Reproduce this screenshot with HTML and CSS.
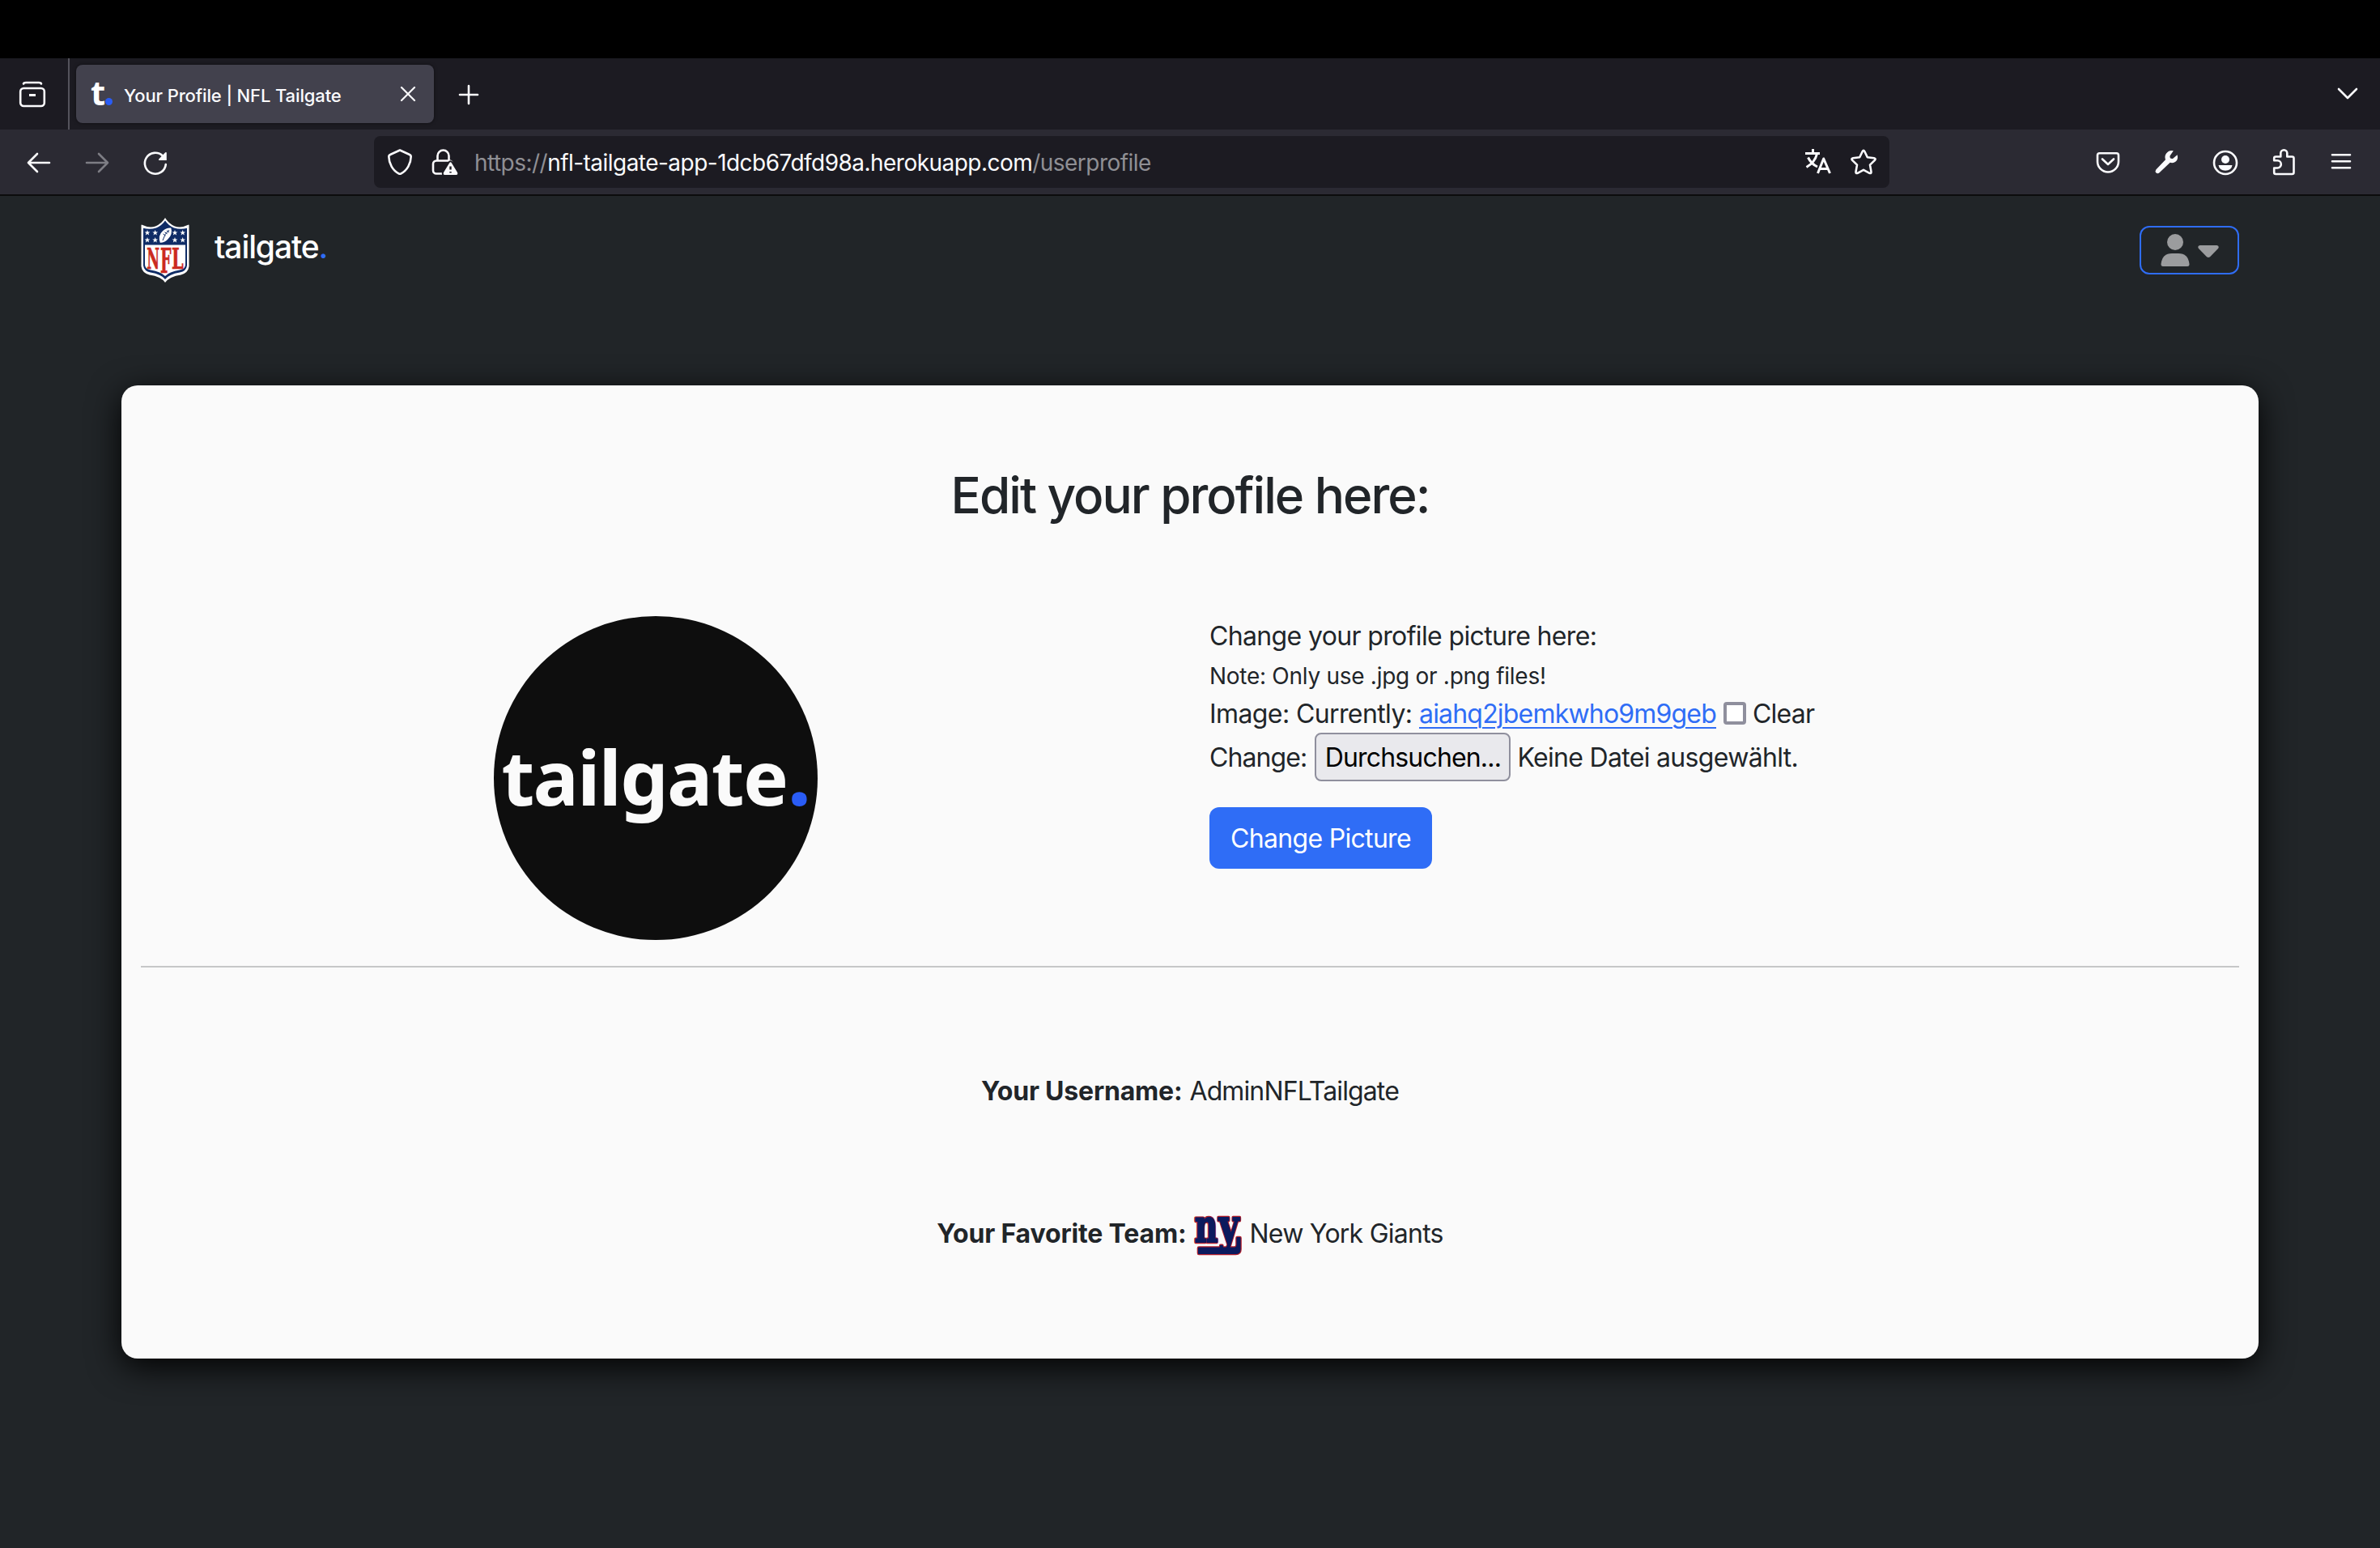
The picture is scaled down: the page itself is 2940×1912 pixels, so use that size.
FILE: index.html
```
<!DOCTYPE html>
<html lang="en">
<head>
<meta charset="utf-8">
<title>Your Profile | NFL Tailgate</title>
<link rel="stylesheet" href="styles.css">
</head>
<body>
<div class="notch"></div>
<div class="tabbar">
  <div class="view-slot">
    <svg class="icon" viewBox="0 0 32 32"><path d="M5 3.500Q5.500 2 8 2h16q2.500 0 3 1.500"/><rect x="1.200" y="9" width="29.600" height="22" rx="4"/><path class="thick" d="M12 17.500h8"/></svg>
  </div>
  <div class="tab">
    <span class="favicon">t<i></i></span>
    <span class="t tab-title">Your Profile | NFL Tailgate</span>
    <svg class="close" viewBox="0 0 20 20"><path d="M2 2l16 16M18 2L2 18"/></svg>
  </div>
  <svg class="icon plus" viewBox="0 0 32 32"><path d="M16 5v22M5 16h22"/></svg>
  <svg class="icon chevron" viewBox="0 0 32 32"><path d="M5 10l11 11 11-11"/></svg>
</div>
<div class="toolbar">
  <svg class="icon" viewBox="0 0 32 32"><path d="M29 17H3M14 6L3 17l11 11"/></svg>
  <svg class="icon dim" viewBox="0 0 32 32"><path d="M3 17h26M18 6l11 11-11 11"/></svg>
  <svg class="icon" viewBox="0 0 32 32"><path d="M28.800 19A13 13 0 1 1 25 8.500"/><path class="solid" d="M29.800 4.500V14H20.500q-1-.5-.3-1.500l8-8.200q1-.8 1.600.2z"/></svg>
  <div class="urlbar">
    <svg class="icon shield" viewBox="0 0 32 32"><path d="M16 1.500l11.500 5.200q2.200.9 2.200 2.800C29.500 18 25 26.500 17.500 30.300q-1.500.8-3 0C7 26.500 2.500 18 2.300 9.500q0-1.900 2.200-2.800z"/></svg>
    <svg class="icon lock" viewBox="0 0 32 32"><path d="M6.500 14V8.500a7 7 0 0 1 14 0V14M13 30.500H5a4 4 0 0 1-4-4v-8a4 4 0 0 1 4-4h16q2 0 3 1.500"/><path class="badge" d="M21 17.500q1.500-2.500 3 0l7 11.500q1 2.800-1.500 3h-14q-2.500-.2-1.500-3z"/><path class="bang" d="M22.500 21.500v4M22.500 28v1.500"/></svg>
    <span class="t url"><span class="faint">https://</span>nfl-tailgate-app-1dcb67dfd98a.herokuapp.com<span class="faint">/userprofile</span></span>
    <svg class="icon translate" viewBox="0 0 32 32"><path d="M0 5.500h18M9.500 0v5M14.500 6Q12 16.500 1.500 22.500M3.500 10.500q4 8 11.500 11.500M15.500 30l7.200-18 7.800 18M18 24.500h10.500"/></svg>
    <svg class="icon" viewBox="0 0 32 32"><path d="M14.700 3q1.300-2.500 2.600 0l3.500 7.300 8.200 1q2.600.6.9 2.600L24 19.600l1.500 8.600q.1 2.500-2.200 1.600L16 25.800l-7.300 4q-2.300.9-2.200-1.600L8 19.600l-5.900-5.700q-1.700-2 .9-2.600l8.200-1z"/></svg>
  </div>
  <div class="tools">
    <svg class="icon" viewBox="0 0 32 32"><path d="M5.500 5.200h21q2.500 0 2.500 2.500V15.500a13 13 0 0 1-26 0V7.700q0-2.500 2.500-2.500zM9 12.500l7 6.500 7-6.500"/></svg>
    <svg class="icon" viewBox="0 0 32 32"><path class="solid" d="M24.800 2.200l-4.300 6.300q-.6 4 3.500 3.500l5.600-4.800q1.500 5.300-1.900 8.300-3 2.500-7 1.300L7.500 29.300q-2 1.700-4 .3-1.800-2-.2-4.200L15 13.200q-1.500-4.500 1-7.800 3.500-4.300 8.800-3.200z"/></svg>
    <svg class="icon" viewBox="0 0 32 32"><circle cx="17" cy="17" r="14"/><circle class="solid" cx="17" cy="13" r="5"/><path class="solid" d="M8.500 20h17q-1 6.500-8.500 6.800-7.500-.3-8.500-6.800z"/></svg>
    <svg class="icon" viewBox="0 0 32 32"><path d="M13.300 9.500V5.200a4 4 0 0 1 8 0V9.500H27.500q2 0 2 2V29q0 2-2 2H7.200q-2 0-2-2V23.500h4a4.600 4.600 0 0 0 0-9.200H5.200V11.500q0-2 2-2z"/></svg>
    <svg class="icon" viewBox="0 0 32 32"><path d="M5 7.200h22M5 15.200h22M5 23.200h22"/></svg>
  </div>
</div>
<div class="page">
  <header class="site">
    <div class="brand">
      <svg class="nfl" viewBox="0 0 60 80">
        <path fill="#fff" d="M30 0Q34 7 42 10.500 50 13 59 8.500L59.500 9V60q-1 8-10 10.500-14 2-19.500 9.500-5-7.500-19.500-9.500-9-2.500-10-10.500V9L1 8.500q9 4.500 17 2Q26 7 30 0z"/>
        <path fill="#0f2c66" d="M30 3.500q4 6 11 9 8 2.500 16 .3V59q-1 7-9 8.500-13 2-18 8.500-5-6.500-18-8.500-8-1.500-9-8.500V12.800q8 2.200 16-.3 7-3 11-9z"/>
        <path fill="#fff" d="M5 33.500h50V58q0 5-7 6.500-13 2-18 7.500-5-5.500-18-7.500-7-1.500-7-6.500z"/>
        <g class="stars"><path id="star" d="M8 15l.9 2.400h2.500l-2 1.600.8 2.500L8 20l-2.200 1.500.8-2.500-2-1.600h2.500z"/><use href="#star" x="9.700"/><use href="#star" x="34"/><use href="#star" x="43.700"/><use href="#star" y="9"/><use href="#star" x="9.700" y="9"/><use href="#star" x="34" y="9"/><use href="#star" x="43.700" y="9"/></g>
        <path fill="#fff" d="M37.300 12.500q2.500 8-4 14-4.500 4.500-9.500 4.300-3-9 3-14.300 4.500-4.500 10.500-4z"/>
        <path fill="none" stroke="#0f2c66" stroke-width="1" d="M27 28q2-8 8-13M27.500 20l3 2M29.500 17.800l3 2M32 15.800l3 2"/>
        <text class="nfl-letter" transform="translate(7.300 63) scale(.48 1)">N</text>
        <text class="nfl-letter" transform="translate(24 67.500) scale(.53 1.170)">F</text>
        <text class="nfl-letter" transform="translate(38 63) scale(.58 1)">L</text>
      </svg>
      <span class="t brand-name">tailgate<span class="blue">.</span></span>
    </div>
    <div class="user-menu">
      <svg class="person" viewBox="0 0 36 40"><circle cx="18" cy="10" r="10"/><path d="M.500 37Q2 24 14 24h8q12 0 13.500 13 .2 3-2.500 3H3Q.3 40 .5 37z"/></svg>
      <svg class="caret" viewBox="0 0 26 16"><path d="M2.500 0h21q3.500 1 1.500 4L15 14.300q-2 1.500-4 0L1 4Q-1 1 2.500 0z"/></svg>
    </div>
  </header>
  <main class="card">
    <h1><span class="t h-title">Edit your profile here:</span></h1>
    <div class="columns">
      <div class="col-pic"><div class="avatar"><span class="t logo-word">tailgate<span class="logo-dot">.</span></span></div></div>
      <form class="col-form">
        <div class="row r1"><span class="t f-label">Change your profile picture here:</span></div>
        <div class="row r2"><span class="t f-note">Note: Only use .jpg or .png files!</span></div>
        <div class="row r3"><span class="t f-cur">Image: Currently:</span><a class="t f-link">aiahq2jbemkwho9m9geb</a><span class="check"></span><span class="t f-clear">Clear</span></div>
        <div class="row r4"><span class="t f-change">Change:</span><span class="browse"><span class="t f-browse">Durchsuchen...</span></span><span class="t f-none">Keine Datei ausgewählt.</span></div>
        <div class="submit"><span class="t f-submit">Change Picture</span></div>
      </form>
    </div>
    <div class="rule"></div>
    <p class="info"><b class="t i-user">Your Username:</b><span class="t i-name">AdminNFLTailgate</span></p>
    <p class="info team"><b class="t i-fav">Your Favorite Team:</b>
      <svg class="giants" viewBox="0 0 60 48">
        <path class="edge" d="M7 39.500H51q3.500 0 3.500-4V27h3v14q0 5-5 5H7z"/>
        <g class="ny edge"><text transform="translate(1.500 32) scale(.68 .96)">n</text><text transform="translate(31.500 32) scale(.74 .96)">y</text></g>
        <path class="fill" d="M7 39.500H51q3.500 0 3.500-4V27h3v14q0 5-5 5H7z"/>
        <g class="ny fill"><text transform="translate(1.500 32) scale(.68 .96)">n</text><text transform="translate(31.500 32) scale(.74 .96)">y</text></g>
      </svg>
      <span class="t i-team">New York Giants</span></p>
  </main>
</div>
</body>
</html>
```
FILE: styles.css
```
* { box-sizing: border-box; }
html, body { margin: 0; height: 1912px; overflow: hidden; }
body { font-family: Inter, "Liberation Sans", sans-serif; font-size: 32px; color: #212529; background: #212529; display: flex; flex-direction: column; }
.t { white-space: pre; display: inline-block; }
.notch { height: 72px; background: #000; flex: none; }

.icon { width: 32px; height: 32px; flex: none; fill: none; stroke: #fbfbfe; stroke-width: 2.6; stroke-linecap: round; stroke-linejoin: round; overflow: visible; }
.icon .solid { fill: #fbfbfe; stroke: none; }
.icon .badge { fill: #fbfbfe; stroke: #1c1b22; stroke-width: 4; paint-order: stroke; }
.icon .thick { stroke-width: 3; stroke-linecap: butt; }
.icon .bang { stroke: #1c1b22; stroke-width: 2.4; stroke-linecap: butt; }
.dim { opacity: .4; }

.tabbar { height: 88px; flex: none; background: #1c1b22; display: flex; align-items: center; padding-right: 24px; }
.view-slot { width: 86px; height: 88px; border-right: 2px solid #54535c; display: flex; align-items: center; padding-left: 24px; margin-right: 8px; }
.tab { width: 442px; height: 72px; border-radius: 8px; background: #42414d; box-shadow: 0 0 4px rgba(0,0,0,.5); display: flex; align-items: center; padding: 0 22px 0 18px; }
.favicon { width: 41px; height: 40px; display: flex; align-items: baseline; font: 700 42px/36px "Noto Sans", sans-serif; color: #fff; }
.favicon i { width: 9px; height: 9px; border-radius: 50%; background: #2a5cf5; }
.tab-title { color: #fbfbfe; font-size: 22px; font-weight: 500; letter-spacing: -.13px; margin-top: 3px; }
.close { width: 20px; height: 20px; margin-left: auto; fill: none; stroke: #fbfbfe; stroke-width: 2.2; stroke-linecap: round; }
.plus { margin-left: 27px; margin-top: 2px; }
.chevron { margin-left: auto; }

.toolbar { height: 82px; flex: none; background: #2b2a33; border-bottom: 2px solid #0c0c0d; display: flex; align-items: center; gap: 40px; padding: 0 32px; }
.urlbar { width: 1872px; height: 64px; margin-left: 214px; border-radius: 8px; background: #1c1b22; display: flex; align-items: center; padding: 0 16px; color: #fbfbfe; font-size: 28px; }
.lock { margin-left: 24px; }
.url { margin-left: 20px; margin-top: 2px; letter-spacing: -.53px; }
.faint { color: #8f8f94; }
.translate { margin-left: auto; margin-right: 24px; stroke-linecap: butt; stroke-width: 3; }
.tools { margin-left: auto; display: flex; gap: 40px; }

.page { flex: 1; background: #212528; padding: 0 150px; }
.site { height: 134px; display: flex; align-items: center; justify-content: space-between; padding: 0 24px; }
.brand { display: flex; align-items: center; }
.nfl { width: 60px; height: 80px; margin-right: 31px; }
.stars { fill: #fff; }
.nfl-letter { font: 700 36px "DejaVu Serif", serif; fill: #cb2a20; stroke: #cb2a20; stroke-width: .6; }
.brand-name { color: #fff; font-size: 39px; font-weight: 500; margin-top: -10px; letter-spacing: -1.1px; }
.blue { color: #2f6df6; }
.user-menu { width: 123px; height: 60px; border: 2px solid #2f6df6; border-radius: 12px; display: flex; align-items: center; padding-left: 24px; fill: #9b9c9e; }
.person { width: 36px; height: 40px; }
.caret { width: 26px; height: 16px; margin-left: 10px; margin-top: 4px; }

.card { margin-top: 100px; height: 1202px; border-radius: 20px; background: #fafafa; box-shadow: 0 10px 40px rgba(0,0,0,.95); padding: 0 24px; display: flex; flex-direction: column; }
h1 { margin: 96px 0 0; height: 80px; line-height: 80px; font-size: 62px; font-weight: 500; text-align: center; letter-spacing: -2px; }
.columns { margin-top: 109px; height: 432px; display: flex; }
.col-pic { width: 1320px; padding-left: 436px; }
.avatar { width: 400px; height: 400px; border-radius: 50%; background: #0e0e0e; display: flex; justify-content: center; }
.logo-word { font: 700 94px/397px "Noto Sans", sans-serif; color: #fafafa; letter-spacing: -1.6px; }
.logo-dot { color: #2a5cf5; font-size: 106px; line-height: 0; }
.row { display: flex; align-items: center; height: 48px; }
.r2 { font-size: 28px; padding-top: 3px; }
.r4 { height: 60px; }
.f-label { letter-spacing: -.64px; }
.f-note { letter-spacing: -.28px; }
.f-cur { letter-spacing: -.6px; }
.f-link { color: #2f6df6; margin-left: 8.6px; letter-spacing: -.81px; text-decoration: underline; text-decoration-thickness: 2px; text-underline-offset: 5px; }
.f-clear { letter-spacing: -.8px; }
.f-change { letter-spacing: -.9px; }
.f-browse { letter-spacing: -.83px; }
.f-none { letter-spacing: -.68px; }
.f-submit { letter-spacing: -.69px; }
.i-user { letter-spacing: -.2px; }
.i-name { letter-spacing: -.88px; }
.i-fav { letter-spacing: -.16px; }
.i-team { letter-spacing: -.75px; }
.check { width: 28px; height: 28px; border: 4px solid #8f8f9d; border-radius: 4px; background: #fff; margin: 0 8px 0 9px; }
.browse { width: 242px; height: 60px; border: 2px solid #8f8f9d; border-radius: 8px; background: #e9e9ed; color: #000; margin: 0 8px 0 10px; display: flex; align-items: center; justify-content: center; }
.submit { width: 275px; height: 76px; margin-top: 32px; border-radius: 12px; background: #2f6df6; color: #fff; display: flex; align-items: center; justify-content: center; }
.rule { height: 2px; background: #c6c7c8; }
.info { margin: 128px 0 0; height: 48px; display: flex; align-items: center; justify-content: center; gap: 9px; }
.giants { width: 60px; height: 48px; margin-top: 6px; overflow: visible; stroke-linejoin: round; }
.ny { font: 700 58px "DejaVu Serif", serif; }
.edge { fill: #b5202c; stroke: #b5202c; stroke-width: 4.6; }
.fill { fill: #0b1a5e; stroke: #0b1a5e; stroke-width: 2.2; }
```
